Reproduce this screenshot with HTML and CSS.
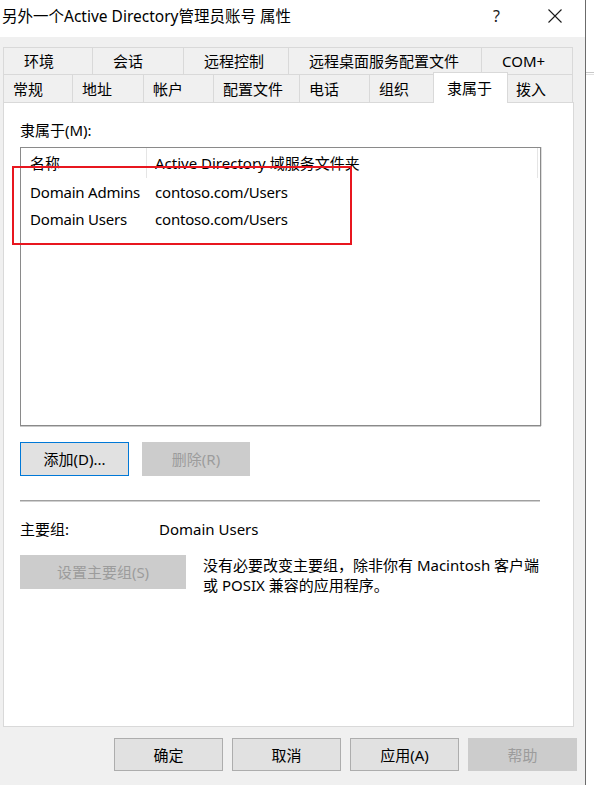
FILE: index.html
```html
<!DOCTYPE html>
<html lang="zh-CN">
<head>
<meta charset="utf-8">
<title>属性</title>
<link rel="stylesheet" href="styles.css">
</head>
<body>
<div class="screen">
  <div class="dialog">
    <div class="titlebar">
      <span class="title">另外一个Active Directory管理员账号 属性</span>
      <span class="help">?</span>
      <span class="close"><svg width="14" height="14" viewBox="0 0 14 14"><path d="M0.5 0.5 L13.5 13.5 M13.5 0.5 L0.5 13.5" stroke="#1a1a1a" stroke-width="1.1" fill="none"/></svg></span>
    </div>
    <div class="body">
      <div class="tabs">
        <div class="tabrow row1">
          <div class="tab t1a">环境</div>
          <div class="tab t1b">会话</div>
          <div class="tab t1c">远程控制</div>
          <div class="tab t1d">远程桌面服务配置文件</div>
          <div class="tab t1e last">COM+</div>
        </div>
        <div class="tabrow row2">
          <div class="tab t2a">常规</div>
          <div class="tab t2b">地址</div>
          <div class="tab t2c">帐户</div>
          <div class="tab t2d">配置文件</div>
          <div class="tab t2e">电话</div>
          <div class="tab t2f">组织</div>
          <div class="tab t2g selected">隶属于</div>
          <div class="tab t2h last">拨入</div>
        </div>
      </div>
      <div class="panel">
        <div class="label">隶属于(M):</div>
        <div class="listbox">
          <div class="lrow header"><div class="c1">名称</div><div class="c2">Active Directory 域服务文件夹</div></div>
          <div class="lrow"><div class="c1">Domain Admins</div><div class="c2">contoso.com/Users</div></div>
          <div class="lrow"><div class="c1">Domain Users</div><div class="c2">contoso.com/Users</div></div>
        </div>
        <div class="btnrow">
          <button class="btn focused w-add">添加(D)...</button>
          <button class="btn disabled w-del">删除(R)</button>
        </div>
        <div class="sep"></div>
        <div class="primary"><span class="plabel">主要组:</span><span>Domain Users</span></div>
        <div class="setrow">
          <button class="btn disabled w-set">设置主要组(S)</button>
          <p class="note">没有必要改变主要组，除非你有 Macintosh 客户端<br>或 POSIX 兼容的应用程序。</p>
        </div>
        <div class="highlight"></div>
      </div>
      <div class="footer">
        <button class="btn fbtn">确定</button>
        <button class="btn fbtn">取消</button>
        <button class="btn fbtn">应用(A)</button>
        <button class="btn fbtn disabled">帮助</button>
      </div>
    </div>
  </div>
  <div class="behind"><div class="bline"></div><div class="bline b2"></div></div>
</div>
</body>
</html>
```

FILE: styles.css
```css
* { box-sizing: border-box; }
html, body { margin: 0; padding: 0; }
body {
  font-family: "Noto Sans", "Noto Sans CJK SC", sans-serif;
  font-size: 15px;
  color: #000;
  background: #fff;
}
.screen { display: flex; width: 594px; height: 785px; overflow: hidden; }
.dialog {
  width: 586px;
  height: 785px;
  border-right: 1px solid #6b6b6b;
  background: #f0f0f0;
  display: flex;
  flex-direction: column;
}
.titlebar {
  height: 37px;
  background: #fff;
  display: flex;
  align-items: flex-start;
  padding-top: 6px;
  line-height: 20px;
}
.title { padding-left: 2px; font-size: 15.5px; }
.help { margin-left: auto; width: 10px; font-size: 16px; color: #1a1a1a; }
.close { margin-left: 45px; margin-right: 23px; margin-top: 3px; height: 14px; display: flex; }

.body { padding: 10px 0 0 3px; flex: 1; display: flex; flex-direction: column; }
.tabs { width: 570px; }
.tabrow { display: flex; }
.row1 { height: 27px; }
.row2 { height: 28px; }
.tab {
  border-top: 1px solid #d9d9d9;
  border-left: 1px solid #d9d9d9;
  display: flex;
  align-items: center;
  line-height: 20px;
  white-space: nowrap;
  background: #f0f0f0;
}
.tab.last { border-right: 1px solid #d9d9d9; }
.row1 .tab { padding-left: 20px; }
.row2 .tab { padding-left: 9px; }
.t1a { width: 89px; }
.t1b { width: 91px; }
.t1c { width: 105px; }
.t1d { width: 193px; }
.t1e { width: 92px; }
.t2a { width: 69px; }
.t2b { width: 71px; }
.t2c { width: 70px; }
.t2d { width: 86px; }
.t2e { width: 70px; }
.t2f { width: 66px; }
.t2g { width: 75px; }
.t2h { width: 67px; }
.row2 .tab.selected {
  background: #fff;
  border-right: 1px solid #d9d9d9;
  margin: -2px -2px -1px -2px;
  height: 31px;
  padding-left: 13px;
  position: relative;
  z-index: 2;
}

.panel {
  position: relative;
  width: 571px;
  height: 625px;
  background: #fff;
  border: 1px solid #d9d9d9;
  padding: 17px 0 0 16px;
}
.label { line-height: 20px; height: 20px; }
.listbox {
  margin-top: 7px;
  width: 521px;
  height: 279px;
  border: 1px solid #8a8a8a;
  box-shadow: 0 1px 0 #c9c9c9, 1px 0 0 #dedede;
  background: #fff;
}
.lrow { display: flex; height: 27px; align-items: center; line-height: 20px; white-space: nowrap; letter-spacing: -0.2px; }
.lrow.header { height: 30px; align-items: stretch; letter-spacing: 0; }
.lrow.header .c1, .lrow.header .c2 { display: flex; align-items: center; border-right: 1px solid #e5e5e5; }
.c1 { width: 126px; padding-left: 9px; }
.c2 { padding-left: 8px; }
.lrow.header .c2 { width: 391px; }

.btnrow { display: flex; gap: 13px; margin-top: 16px; }
.btn {
  font-family: inherit;
  font-size: 15px;
  height: 34px;
  background: #e1e1e1;
  border: 1px solid #adadad;
  color: #000;
  padding: 0;
  line-height: 20px;
  border-radius: 0;
}
.btn.focused { border-color: #0078d7; background: #e1e1e1; }
.btn.disabled { background: #cccccc; border-color: #cccccc; color: #9c9c9c; }
.w-add { width: 109px; }
.w-del { width: 108px; }
.sep {
  margin-top: 24px;
  width: 520px;
  height: 2px;
  border-top: 1px solid #a0a0a0;
  border-bottom: 1px solid #d0d0d0;
}
.primary { display: flex; margin-top: 17px; line-height: 20px; }
.plabel { width: 139px; }
.setrow { display: flex; margin-top: 16px; align-items: flex-start; gap: 17px; }
.w-set { width: 166px; }
.note { margin: 0; line-height: 20px; padding-top: 0; }
.highlight {
  position: absolute;
  left: 8px;
  top: 63px;
  width: 340px;
  height: 79px;
  border: 2px solid #e8161f;
}

.footer {
  display: flex;
  justify-content: flex-end;
  gap: 9px;
  margin-top: 11px;
  padding-right: 8px;
}
.fbtn { width: 109px; height: 33px; }

.behind { flex: 1; background: #fff; }
.bline { margin-top: 72px; height: 1px; background: #c8c8c8; }
.bline.b2 { margin-top: 1px; background: #e0e0e0; }
```
